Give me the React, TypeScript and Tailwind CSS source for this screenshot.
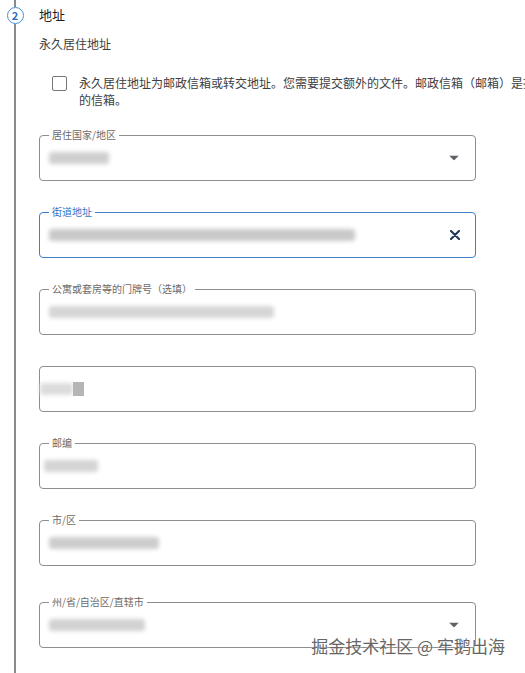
const Blur: React.FC<{ w: number; tone?: string }> = ({ w, tone = "bg-[#cfcfcf]" }) => (
    <div className={`h-[12px] rounded-[3px] blur-[2px] ${tone}`} style={{ width: w }} />
);

const Caret: React.FC = () => (
    <svg width="10" height="5" viewBox="0 0 10 5" className="absolute right-[16px] top-1/2 -translate-y-1/2">
        <polygon points="0,0 10,0 5,5" fill="#5f6368" />
    </svg>
);

const Clear: React.FC = () => (
    <svg width="10" height="10" viewBox="0 0 10 10" className="absolute right-[15px] top-1/2 -translate-y-1/2">
        <path d="M1 1 L9 9 M9 1 L1 9" stroke="#23395d" strokeWidth="2.2" strokeLinecap="round" />
    </svg>
);

type FieldProps = {
    label?: string;
    focused?: boolean;
    children?: React.ReactNode;
    className?: string;
};

const Field: React.FC<FieldProps> = ({ label, focused, children, className = "" }) => (
    <div
        className={`relative h-[46px] w-[437px] rounded-[4px] border flex items-center pl-[9px] ${
            focused ? "border-[#3f7fc9]" : "border-[#8d8d8d]"
        } ${className}`}
    >
        {label && (
            <span
                className={`absolute -top-[8px] left-[9px] bg-white px-[3px] text-[10px] leading-[14px] ${
                    focused ? "text-[#2f74c7]" : "text-[#6b6b6b]"
                }`}
            >
                {label}
            </span>
        )}
        {children}
    </div>
);

export default function App() {
    return (
        <div className="relative flex w-[525px] h-[673px] overflow-hidden bg-white font-['Noto_Sans_CJK_SC','Noto_Sans',sans-serif]">
            {/* stepper rail */}
            <div className="flex w-[30px] shrink-0 flex-col items-center">
                <div className="h-[7px] w-[2px] bg-[#8a8a8a]" />
                <div className="flex h-[17px] w-[17px] items-center justify-center rounded-full border-[1.5px] border-[#4a8fd6] bg-white text-[11px] font-bold leading-none text-[#2c6fbf]">
                    2
                </div>
                <div className="w-[2px] flex-1 bg-[#8a8a8a]" />
            </div>

            <div className="ml-[9px] flex flex-col">
                <p className="pt-[6px] text-[13px] leading-[18px] text-[#202124]">地址</p>
                <p className="mt-[11px] text-[12px] leading-[18px] text-[#3c4043]">永久居住地址</p>

                <div className="mt-[21px] ml-[13px] flex gap-[12px]">
                    <div className="mt-[2px] h-[15px] w-[15px] shrink-0 rounded-[2px] border-[1.5px] border-[#767676]" />
                    <p className="w-[494px] shrink-0 text-[12px] leading-[17px] text-[#3c4043]">
                        永久居住地址为邮政信箱或转交地址。您需要提交额外的文件。邮政信箱（邮箱）是指邮局内的信箱。
                    </p>
                </div>

                <div className="mt-[27px] flex flex-col gap-[31px]">
                    <Field label="居住国家/地区">
                        <Blur w={60} />
                        <Caret />
                    </Field>
                    <Field label="街道地址" focused>
                        <Blur w={306} tone="bg-[#c9c9c9]" />
                        <Clear />
                    </Field>
                    <Field label="公寓或套房等的门牌号（选填）">
                        <Blur w={225} tone="bg-[#d6d6d6]" />
                    </Field>
                    <Field>
                        <div className="flex items-center -ml-[9px]">
                            <Blur w={33} tone="bg-[#dcdcdc]" />
                            <div className="h-[14px] w-[11px] bg-[#b5b5b5] blur-[0.6px]" />
                        </div>
                    </Field>
                    <Field label="邮编">
                        <div className="-ml-[5px]">
                            <Blur w={54} tone="bg-[#d4d4d4]" />
                        </div>
                    </Field>
                    <Field label="市/区">
                        <Blur w={110} tone="bg-[#cdcdcd]" />
                    </Field>
                    <Field label="州/省/自治区/直辖市" className="mt-[5px]">
                        <Blur w={96} tone="bg-[#d2d2d2]" />
                        <Caret />
                    </Field>
                </div>
            </div>

            <span className="absolute right-[20px] top-[635px] text-[17px] leading-[22px] text-[#666] [text-shadow:0_0_2px_#fff]">
                掘金技术社区 @ 牢鹅出海
            </span>
        </div>
    );
}
